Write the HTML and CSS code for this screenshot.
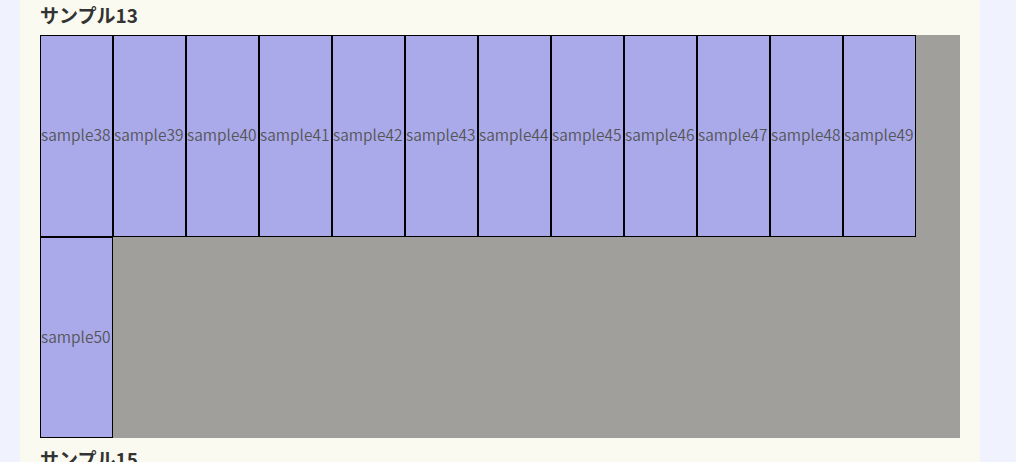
FILE: index.html
```html
<!DOCTYPE html>
<html lang="ja">
<head>
<meta charset="utf-8">
<link rel="stylesheet" href="styles.css">
</head>
<body>
<main class="page">
  <section class="sample">
    <h2 class="title">サンプル13</h2>
    <div class="box">
      <div class="item">sample38</div>
      <div class="item">sample39</div>
      <div class="item">sample40</div>
      <div class="item">sample41</div>
      <div class="item">sample42</div>
      <div class="item">sample43</div>
      <div class="item">sample44</div>
      <div class="item">sample45</div>
      <div class="item">sample46</div>
      <div class="item">sample47</div>
      <div class="item">sample48</div>
      <div class="item">sample49</div>
      <div class="item">sample50</div>
    </div>
  </section>
  <section class="sample">
    <h2 class="title">サンプル15</h2>
  </section>
</main>
</body>
</html>
```

FILE: styles.css
```css
html, body {
  margin: 0;
  padding: 0;
  background: #f0f2fe;
  font-family: "Noto Sans CJK JP", "Noto Sans", sans-serif;
}
.page {
  width: 920px;
  margin-left: 20px;
  padding: 0 20px;
  background: #fafaf0;
  min-height: 462px;
}
.title {
  margin: 0;
  padding-top: 1px;
  font-size: 19px;
  line-height: 28px;
  font-weight: bold;
  color: #333;
  height: 35px;
  box-sizing: border-box;
}
.box {
  display: flex;
  flex-wrap: wrap;
  align-content: stretch;
  height: 403px;
  background: #a19f9c;
  margin-bottom: 6px;
}
.item {
  width: 71px;
  border: 1px solid #000;
  background: #aaaaeb;
  color: #555;
  font-size: 15.5px;
  font-weight: 350;
  white-space: nowrap;
  display: flex;
  align-items: center;
  padding-bottom: 3px;
  box-sizing: content-box;
}
```
